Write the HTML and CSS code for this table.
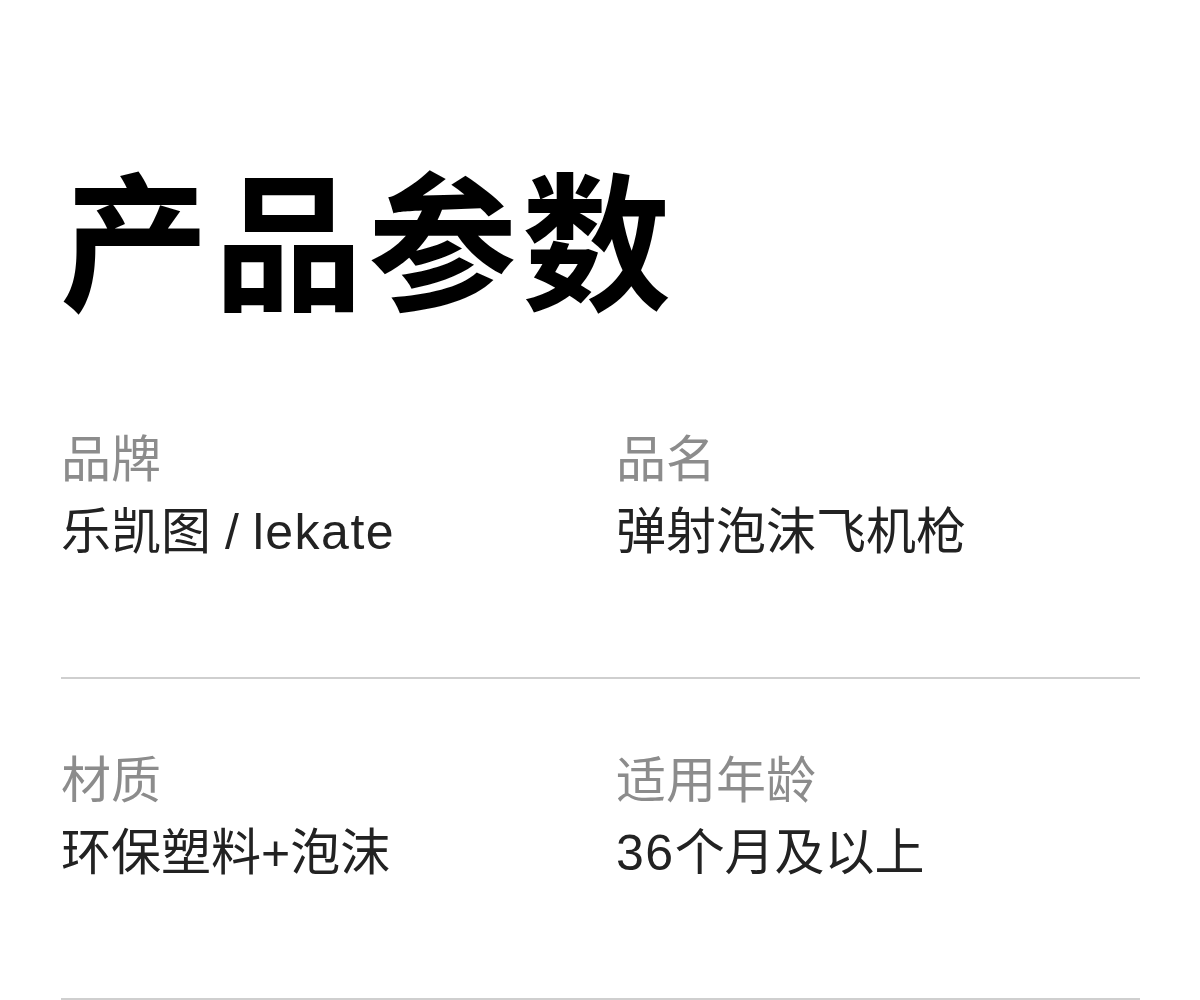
FILE: index.html
```html
<!DOCTYPE html>
<html lang="zh-CN">
<head>
<meta charset="utf-8">
<title>产品参数</title>
<link rel="stylesheet" href="styles.css">
</head>
<body>
<main class="page">
  <h1 class="title">产品参数</h1>
  <section class="specs">
    <div class="spec">
      <div class="label">品牌</div>
      <div class="value">乐凯图 / <span class="latin">lekate</span></div>
    </div>
    <div class="spec">
      <div class="label">品名</div>
      <div class="value">弹射泡沫飞机枪</div>
    </div>
  </section>
  <section class="specs">
    <div class="spec">
      <div class="label">材质</div>
      <div class="value">环保塑料+泡沫</div>
    </div>
    <div class="spec">
      <div class="label">适用年龄</div>
      <div class="value"><span class="latin">36</span>个月及以上</div>
    </div>
  </section>
</main>
</body>
</html>
```
FILE: styles.css
```css
html, body {
  margin: 0;
  padding: 0;
  background: #ffffff;
}
body {
  font-family: "Liberation Sans", "Noto Sans CJK SC", sans-serif;
}
.page {
  padding: 160px 60px 0 61px;
}
.title {
  margin: 0 0 49px -1px;
  font-family: "Noto Sans CJK SC", sans-serif;
  font-size: 149px;
  line-height: 149px;
  font-weight: 700;
  color: #000000;
  letter-spacing: 5px;
}
.specs {
  display: grid;
  grid-template-columns: 555px 1fr;
  padding: 67px 0 115px 0;
  border-bottom: 2px solid #cfcfcf;
}
.spec {
  display: flex;
  flex-direction: column;
  gap: 17px;
}
.label {
  font-family: "Noto Sans CJK SC", sans-serif;
  font-size: 50px;
  line-height: 60px;
  color: #8c8c8c;
}
.value {
  font-size: 50px;
  line-height: 60px;
  color: #222222;
}
.latin {
  letter-spacing: 1.5px;
}
```
